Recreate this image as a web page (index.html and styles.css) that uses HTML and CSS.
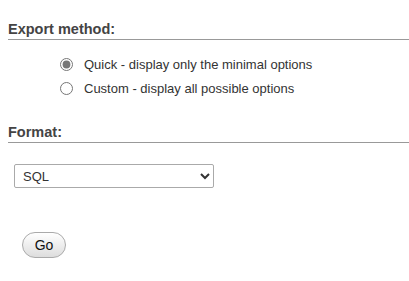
FILE: index.html
```html
<!DOCTYPE html>
<html lang="en">
<head>
    <meta charset="UTF-8">
    <meta name="viewport" content="width=device-width, initial-scale=1.0">
    <title>Export</title>
    <link rel="stylesheet" href="styles.css">
</head>
<body>
    <div class="exportoptions" id="quick_or_custom">
        <h3>Export method:</h3>
        <ul>
            <li>
                <input type="radio" name="quick_or_custom" value="quick" id="radio_quick_export" checked>
                <label for="radio_quick_export">Quick - display only the minimal options</label>
            </li>
            <li>
                <input type="radio" name="quick_or_custom" value="custom" id="radio_custom_export">
                <label for="radio_custom_export">Custom - display all possible options</label>
            </li>
        </ul>
    </div>

    <div class="exportoptions" id="format">
        <h3>Format:</h3>
        <select id="plugins" name="what">
            <option value="sql" selected>SQL</option>
            <option value="csv">CSV</option>
            <option value="json">JSON</option>
        </select>
    </div>

    <div class="exportoptions" id="submit">
        <button type="submit" id="buttonGo">Go</button>
    </div>
</body>
</html>
```

FILE: styles.css
```css
body {
    margin: 0;
    padding: 8px 0 0 8px;
    font-family: Arial, "Liberation Sans", sans-serif;
    font-size: 13px;
    color: #333;
}
.exportoptions h3 {
    margin: 0;
    padding: 13px 0 2px 0;
    font-size: 14.5px;
    font-weight: bold;
    color: #444;
    border-bottom: 1px solid #999;
    line-height: 16px;
}
.exportoptions ul {
    list-style: none;
    margin: 0;
    padding: 12px 0 0 52px;
}
.exportoptions li {
    display: flex;
    align-items: center;
    height: 24px;
}
.exportoptions input[type="radio"] {
    margin: 0 11px 0 0;
    width: 13px;
    height: 13px;
    accent-color: #777;
}
#format h3 {
    margin-top: 11px;
}
#plugins {
    margin: 21px 0 0 6px;
    width: 200px;
    height: 24px;
    padding: 0 4px;
    font-family: Arial, "Liberation Sans", sans-serif;
    font-size: 13px;
    color: #333;
    background: #fff;
    border: 1px solid #aaa;
    border-radius: 2px;
}
#submit {
    padding: 44px 0 0 14px;
}
#buttonGo {
    width: 44px;
    height: 26px;
    font-family: Arial, "Liberation Sans", sans-serif;
    font-size: 14px;
    color: #111;
    background: linear-gradient(#fff, #ddd);
    border: 1px solid #aaa;
    border-radius: 13px;
    cursor: pointer;
}
```
